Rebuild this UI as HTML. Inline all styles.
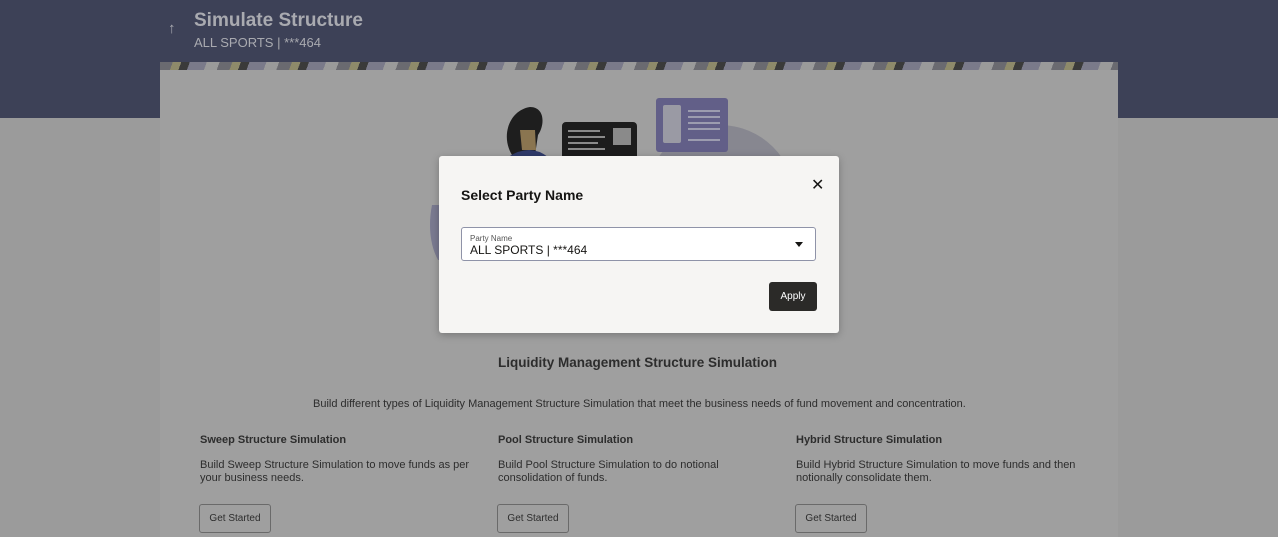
<!DOCTYPE html>
<html><head><style>
*{margin:0;padding:0;box-sizing:border-box}
body{width:1278px;height:537px;overflow:hidden;background:#9b9b9b;font-family:"Liberation Sans",sans-serif;position:relative}
.hdr{position:absolute;left:0;top:0;width:1278px;height:118px;background:#3d4157}
.t1{position:absolute;left:194px;top:10px;font-size:19px;font-weight:bold;color:#a9aab0}
.t2{position:absolute;left:194px;top:35px;font-size:13px;color:#a9aab0}
.arr{position:absolute;left:168px;top:20px;font-size:15px;color:#a9aab0}
.strip{position:absolute;left:160px;top:62px;width:958px;height:8px;background:repeating-linear-gradient(110deg,#6a6a70 0 12px,#8e8a6a 12px 20px,#3a3a3a 20px 28px,#7a7a8a 28px 44px,#9a9a9a 44px 56px)}
.card{position:absolute;left:160px;top:70px;width:958px;height:467px;background:#9f9f9f}
.txt{position:absolute;color:#2d2d2d;font-size:11px}
.b{font-weight:bold}
.btn{position:absolute;width:72px;height:29px;border:1px solid #6a6a6a;border-radius:3px;font-size:10px;color:#2d2d2d;text-align:center;line-height:27px}
.modal{position:absolute;left:439px;top:156px;width:400px;height:177px;background:#f6f5f3;border-radius:3px;box-shadow:0 2px 8px rgba(0,0,0,.25)}
</style></head><body>
<div class="hdr"></div>
<div class="arr">↑</div>
<div class="t1">Simulate Structure</div>
<div class="t2">ALL SPORTS | ***464</div>
<div class="strip"></div>
<div class="card"></div>
<svg style="position:absolute;left:420px;top:95px" width="380" height="175">
<ellipse cx="300" cy="105" rx="75" ry="75" fill="#878790"/>
<rect x="236" y="3" width="72" height="54" rx="3" fill="#625f88"/>
<rect x="243" y="10" width="18" height="38" rx="2" fill="#9a9aa4"/>
<g stroke="#b0b0bc" stroke-width="1.5"><line x1="268" y1="16" x2="300" y2="16"/><line x1="268" y1="22" x2="300" y2="22"/><line x1="268" y1="28" x2="300" y2="28"/><line x1="268" y1="34" x2="300" y2="34"/><line x1="268" y1="45" x2="300" y2="45"/></g>
<rect x="142" y="27" width="75" height="40" rx="4" fill="#1c1c1c"/>
<g stroke="#8a8a8a" stroke-width="2"><line x1="148" y1="36" x2="180" y2="36"/><line x1="148" y1="42" x2="185" y2="42"/><line x1="148" y1="48" x2="178" y2="48"/><line x1="148" y1="54" x2="185" y2="54"/></g>
<rect x="193" y="33" width="18" height="17" fill="#8a8a8a"/>
<path d="M92 60 C80 40 90 15 110 12 C125 12 125 30 118 40 L115 60 Z" fill="#1e1e1e"/>
<path d="M100 35 L115 35 L116 55 L102 55Z" fill="#8a7550"/>
<path d="M88 62 Q110 48 128 62 Z" fill="#2f3a6a"/>
<path d="M12 110 C8 130 10 150 18 165 L30 165 C25 145 28 125 20 110Z" fill="#7a7a90"/>
</svg>
<div class="txt b" style="left:498px;top:355px;font-size:13.5px">Liquidity Management Structure Simulation</div>
<div class="txt" style="left:313px;top:398px">Build different types of Liquidity Management Structure Simulation that meet the business needs of fund movement and concentration.</div>
<div class="txt b" style="left:200px;top:434px">Sweep Structure Simulation</div>
<div class="txt" style="left:200px;top:459px;line-height:13px">Build Sweep Structure Simulation to move funds as per<br>your business needs.</div>
<div class="btn" style="left:199px;top:504px">Get Started</div>
<div class="txt b" style="left:498px;top:434px">Pool Structure Simulation</div>
<div class="txt" style="left:498px;top:459px;line-height:13px">Build Pool Structure Simulation to do notional<br>consolidation of funds.</div>
<div class="btn" style="left:497px;top:504px">Get Started</div>
<div class="txt b" style="left:796px;top:434px">Hybrid Structure Simulation</div>
<div class="txt" style="left:796px;top:459px;line-height:13px">Build Hybrid Structure Simulation to move funds and then<br>notionally consolidate them.</div>
<div class="btn" style="left:795px;top:504px">Get Started</div>
<div class="modal">
<div style="position:absolute;left:22px;top:31px;font-size:14px;font-weight:bold;color:#161513">Select Party Name</div>
<div style="position:absolute;left:372px;top:19px;font-size:16px;color:#161513">✕</div>
<div style="position:absolute;left:22px;top:71px;width:355px;height:34px;border:1px solid #8f93a8;border-radius:3px;background:#fff">
<div style="position:absolute;left:8px;top:6px;font-size:8px;color:#555">Party Name</div>
<div style="position:absolute;left:8px;top:15px;font-size:12px;color:#161513">ALL SPORTS | ***464</div>
<div style="position:absolute;right:12px;top:14px;width:0;height:0;border-left:4px solid transparent;border-right:4px solid transparent;border-top:5px solid #161513"></div>
</div>
<div style="position:absolute;left:330px;top:126px;width:48px;height:29px;background:#2b2a28;border-radius:3px;color:#fff;font-size:10px;text-align:center;line-height:29px">Apply</div>
</div>
</body></html>
